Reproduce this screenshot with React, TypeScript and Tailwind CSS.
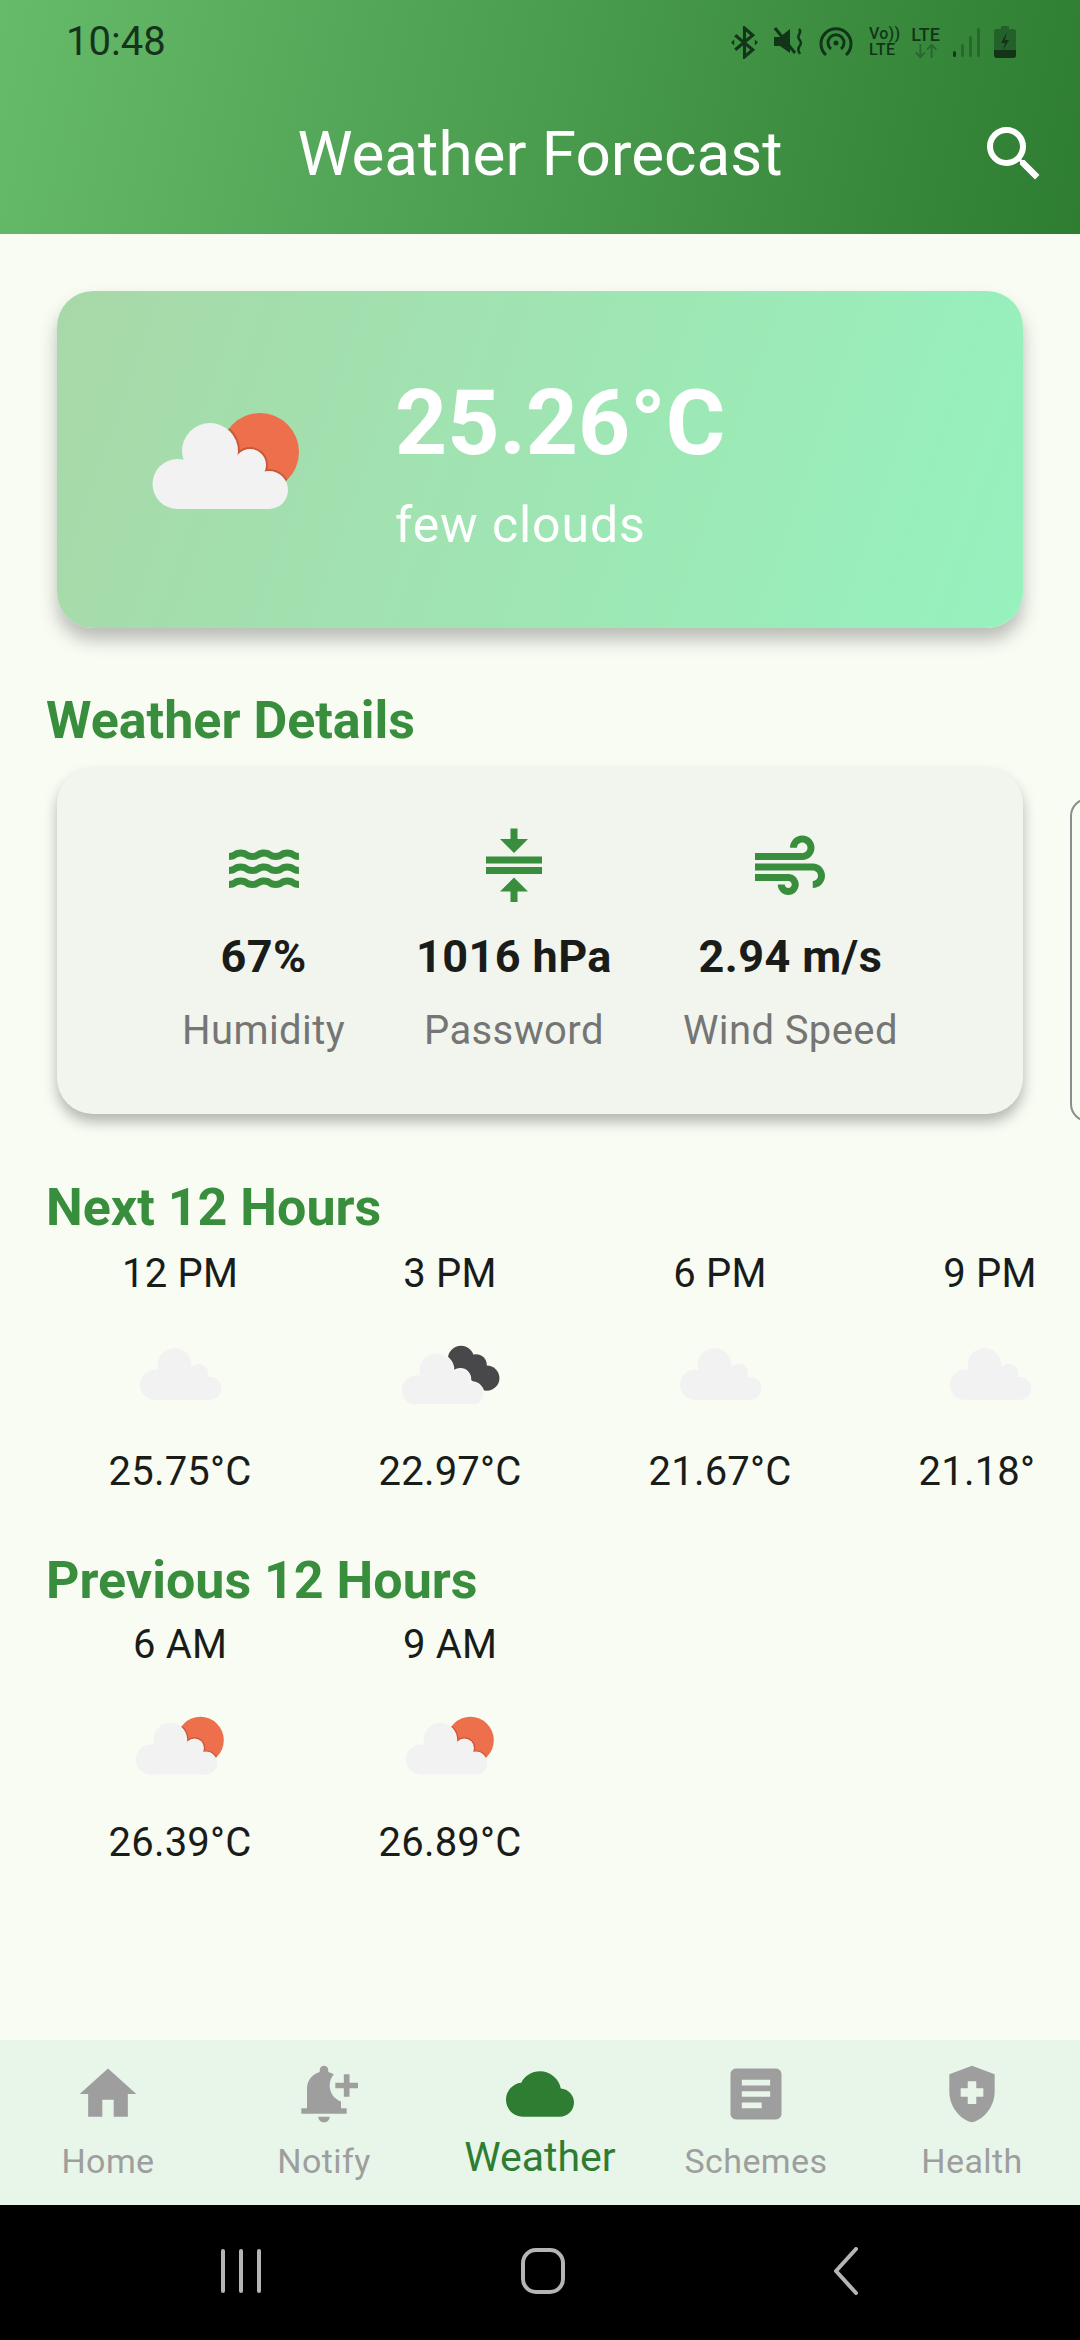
import { MdAir, MdArticle, MdCloud, MdCompress, MdHealthAndSafety, MdHome, MdNotificationAdd, MdSearch, MdWater } from "react-icons/md";

const font = { fontFamily: "Roboto, sans-serif" };

// lobes of the weather cloud, in a 150x100 box
function CloudShape({ fill, stroke }: { fill: string; stroke?: string }) {
    const s = stroke ? { stroke, strokeWidth: 4 } : {};
    return (
        <g fill={fill} {...s}>
            <circle cx="26.5" cy="74" r="25" />
            <circle cx="59" cy="41" r="28" />
            <circle cx="99" cy="55" r="16" />
            <circle cx="118" cy="80" r="19" />
            <path d="M26 62h92v37H26z" />
            <path d="M45 48h55v30H45z" />
        </g>
    );
}

function WeatherIcon({ kind, width, height }: { kind: "sun" | "cloud" | "dark"; width: number; height: number }) {
    const box = kind === "sun" ? "0 0 150 100" : kind === "dark" ? "0 -3 165 100" : "0 6 138 100";
    return (
        <svg viewBox={box} width={width} height={height}>
            {kind === "sun" && (
                <>
                    <clipPath id="sun-clip">
                        <circle cx="109" cy="42" r="39" />
                    </clipPath>
                    <circle cx="109" cy="42" r="39" fill="#EE6F4B" />
                    <g clipPath="url(#sun-clip)">
                        <CloudShape fill="#C9583A" stroke="#C9583A" />
                    </g>
                </>
            )}
            {kind === "dark" && (
                <g fill="#48484A">
                    <circle cx="100" cy="22" r="22" />
                    <circle cx="125" cy="32" r="18" />
                    <circle cx="143" cy="54" r="21" />
                    <path d="M100 10l40 30-15 25-30-30z" />
                </g>
            )}
            {kind === "dark" && <CloudShape fill="#F8FCF3" stroke="#F8FCF3" />}
            <CloudShape fill="#F2F2F2" />
        </svg>
    );
}

function StatusIcons() {
    return (
        <div className="flex items-center text-[#12351a]">
            <svg viewBox="0 0 26 32" width="27" height="33" fill="none" stroke="currentColor" strokeWidth="3">
                <path d="M4 9l17 14-8 7V2l8 7L4 23" />
                <path d="M0 16l3-3v6zM26 16l-3-3v6z" fill="currentColor" stroke="none" />
            </svg>
            <svg viewBox="0 0 30 30" width="30" height="30" className="ml-[16px]" fill="currentColor">
                <path d="M0 10h6l10-8v24L6 19H0z" />
                <path d="M1 1l20 25" stroke="currentColor" strokeWidth="3" />
                <path d="M25 2c4 4-3 6 0 10s2 5 0 8 0 5 1 7" fill="none" stroke="currentColor" strokeWidth="2.5" />
            </svg>
            <svg viewBox="0 0 34 32" width="34" height="32" className="ml-[15px]" fill="none" stroke="currentColor" strokeWidth="3">
                <path d="M7 29a15 15 0 1 1 20 0" />
                <path d="M12 23a8 8 0 1 1 10 0" />
                <circle cx="17" cy="17" r="2.5" fill="currentColor" stroke="none" />
            </svg>
            <div className="ml-[16px] flex flex-col items-start text-[16px] leading-[16px] font-medium tracking-[0.3px]">
                <span>Vo))</span>
                <span>LTE</span>
            </div>
            <div className="ml-[11px] flex flex-col items-center text-[18px] leading-[18px] font-medium">
                <span>LTE</span>
                <svg viewBox="0 0 26 16" width="26" height="15" fill="none" stroke="currentColor" strokeWidth="2" className="opacity-40">
                    <path d="M7 0v14M2 9l5 5 5-5M19 15V1M14 6l5-5 5 5" />
                </svg>
            </div>
            <svg viewBox="0 0 28 30" width="28" height="30" className="ml-[13px]" fill="currentColor">
                <rect x="0" y="24" width="3" height="6" rx="1.5" />
                <rect x="8" y="17" width="3" height="13" rx="1.5" opacity="0.35" />
                <rect x="16" y="9" width="3" height="21" rx="1.5" opacity="0.35" />
                <rect x="24" y="1" width="3" height="29" rx="1.5" opacity="0.35" />
            </svg>
            <svg viewBox="0 0 22 32" width="22" height="32" className="ml-[13px]" fill="currentColor">
                <path d="M7 0h8v3H7z" opacity="0.45" />
                <rect x="0" y="3" width="22" height="29" rx="3" opacity="0.45" />
                <path d="M0 24h22v5a3 3 0 0 1-3 3H3a3 3 0 0 1-3-3z" />
                <path d="M13 6l-6 11h4l-2 7 6-10h-4z" />
            </svg>
        </div>
    );
}

function SectionTitle({ children, className }: { children: string; className: string }) {
    return <h2 className={`ml-[46px] text-[52px] leading-[60px] font-bold text-[#388E3C] ${className}`}>{children}</h2>;
}

function Detail({ icon, value, label }: { icon: React.ReactNode; value: string; label: string }) {
    return (
        <div className="flex flex-col items-center">
            <div className="text-[84px] text-[#388E3C]">{icon}</div>
            <div className="mt-[20px] text-[45px] leading-[56px] font-bold tracking-[0.4px] text-[#1a1c1a]">{value}</div>
            <div className="mt-[21px] text-[40px] leading-[50px] tracking-[0.4px] text-[#757575]">{label}</div>
        </div>
    );
}

function HourRow({ items, className }: { items: { time: string; temp: string; kind: "sun" | "cloud" | "dark" }[]; className: string }) {
    return (
        <div className={`mx-[45px] flex overflow-hidden ${className}`}>
            {items.map((h) => (
                <div key={h.time} className="flex w-[270px] shrink-0 flex-col items-center text-[40px] leading-[50px] tracking-[0.2px] text-[#1a1c1a]">
                    <span>{h.time}</span>
                    <div className="mt-[45px] flex h-[60px] items-center justify-center">
                        <WeatherIcon kind={h.kind} width={h.kind === "sun" ? 90 : h.kind === "dark" ? 99 : 83} height={60} />
                    </div>
                    <span className="mt-[43px]">{h.temp}</span>
                </div>
            ))}
        </div>
    );
}

const next = [
    { time: "12 PM", temp: "25.75°C", kind: "cloud" as const },
    { time: "3 PM", temp: "22.97°C", kind: "dark" as const },
    { time: "6 PM", temp: "21.67°C", kind: "cloud" as const },
    { time: "9 PM", temp: "21.18°C", kind: "cloud" as const },
];

const prev = [
    { time: "6 AM", temp: "26.39°C", kind: "sun" as const },
    { time: "9 AM", temp: "26.89°C", kind: "sun" as const },
];

const tabs = [
    { label: "Home", icon: <MdHome /> },
    { label: "Notify", icon: <MdNotificationAdd /> },
    { label: "Weather", icon: <MdCloud />, active: true },
    { label: "Schemes", icon: <MdArticle /> },
    { label: "Health", icon: <MdHealthAndSafety /> },
];

export default function App() {
    return (
        <div className="flex h-[2340px] w-[1080px] flex-col overflow-hidden bg-[#F8FCF3]" style={font}>
            <header className="h-[234px] shrink-0 bg-linear-[102deg] from-[#66BB6A] to-[#2E7D32]">
                <div className="flex h-[84px] items-center justify-between pr-[64px] pl-[66px]">
                    <span className="text-[40px] text-[#16331b]">10:48</span>
                    <StatusIcons />
                </div>
                <div className="relative flex h-[140px] items-center justify-center">
                    <h1 className="text-[62px] leading-none text-white">Weather Forecast</h1>
                    <MdSearch className="absolute right-[30px] text-[72px] text-white" />
                </div>
            </header>

            <main className="flex-1 overflow-hidden">
                <section className="mx-[57px] mt-[57px] flex h-[337px] items-center rounded-[36px] bg-linear-[109deg] from-[#A8D8A8] to-[#96F2BE] pl-[94px] shadow-[0_12px_18px_rgba(0,0,0,0.25)]">
                    <WeatherIcon kind="sun" width={150} height={100} />
                    <div className="mt-[6px] ml-[94px]">
                        <div className="text-[91px] leading-[106px] font-bold text-white">25.26°C</div>
                        <div className="mt-[19px] text-[50px] leading-[60px] tracking-[0.9px] text-white">few clouds</div>
                    </div>
                </section>

                <SectionTitle className="mt-[63px]">Weather Details</SectionTitle>
                <div className="mt-[17px] flex items-start">
                    <section className="ml-[57px] flex h-[346px] w-[966px] shrink-0 justify-evenly rounded-[36px] bg-[#F2F5ED] px-[54px] pt-[57px] shadow-[0_8px_14px_rgba(0,0,0,0.28)]">
                        <Detail icon={<MdWater />} value="67%" label="Humidity" />
                        <Detail icon={<MdCompress />} value="1016 hPa" label="Password" />
                        <Detail icon={<MdAir />} value="2.94 m/s" label="Wind Speed" />
                    </section>
                    <div className="mt-[30px] ml-[47px] h-[324px] w-[966px] shrink-0 rounded-[18px] border-2 border-[#8c8c8c]" />
                </div>

                <SectionTitle className="mt-[56px]">Next 12 Hours</SectionTitle>
                <HourRow items={next} className="mt-[11px]" />

                <SectionTitle className="mt-[54px]">Previous 12 Hours</SectionTitle>
                <HourRow items={prev} className="mt-[9px]" />
            </main>

            <nav className="flex h-[165px] shrink-0 bg-[#E8F5E9] pt-[20px]">
                {tabs.map((t) => (
                    <div key={t.label} className={`flex flex-1 flex-col items-center ${t.active ? "text-[#2E7D32]" : "text-[#9E9E9E]"}`}>
                        <div className="text-[68px] leading-none">{t.icon}</div>
                        <span className={t.active ? "mt-[5px] text-[41px] leading-[48px]" : "mt-[13px] text-[34px] leading-[40px] tracking-[0.4px]"}>{t.label}</span>
                    </div>
                ))}
            </nav>

            <div className="flex h-[135px] shrink-0 items-center bg-black pb-[4px]">
                <div className="flex w-[360px] shrink-0 justify-center pl-[122px]">
                    <svg viewBox="0 0 40 44" width="40" height="44" fill="none" stroke="#B5B5B5" strokeWidth="4" strokeLinecap="round">
                        <path d="M2 2v40M20 2v40M38 2v40" />
                    </svg>
                </div>
                <div className="flex w-[360px] shrink-0 justify-center pl-[6px]">
                    <svg viewBox="0 0 44 46" width="44" height="46" fill="none" stroke="#B5B5B5" strokeWidth="4">
                        <rect x="2" y="2" width="40" height="42" rx="13" />
                    </svg>
                </div>
                <div className="flex w-[360px] shrink-0 justify-center pr-[108px]">
                    <svg viewBox="0 0 26 48" width="26" height="48" fill="none" stroke="#B5B5B5" strokeWidth="4" strokeLinecap="round" strokeLinejoin="round">
                        <path d="M23 2L3 24l20 22" />
                    </svg>
                </div>
            </div>
        </div>
    );
}
